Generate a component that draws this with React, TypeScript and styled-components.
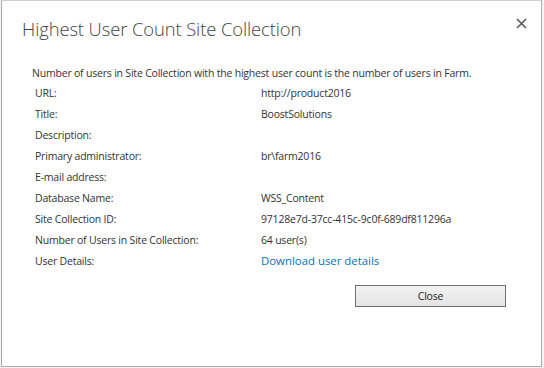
import React from "react";
import styled, { createGlobalStyle } from "styled-components";

const Global = createGlobalStyle`
  html, body { margin: 0; padding: 0; background: #ffffff; }
  body { width: 544px; height: 368px; overflow: hidden; font-family: "Open Sans", "Liberation Sans", sans-serif; }
`;

const Page = styled.div`
  width: 544px;
  height: 368px;
  display: flex;
  background: #f4f4f4;
  box-sizing: border-box;
  padding: 0 2px 1px 1px;
`;

const Dialog = styled.div`
  flex: 1;
  background: #ffffff;
  border: 1px solid #ababab;
  border-top-color: #d0d0d0;
  display: flex;
  flex-direction: column;
  box-sizing: border-box;
`;

const Header = styled.div`
  display: flex;
  justify-content: space-between;
  align-items: flex-start;
  padding: 14px 13px 0 20px;
`;

const Title = styled.h1`
  margin: 0;
  font-family: "Open Sans", sans-serif;
  font-weight: 300;
  font-size: 18.4px;
  color: #444444;
  line-height: 28px;
  letter-spacing: -0.1px;
`;

const CloseX = styled.button`
  border: 0;
  background: none;
  padding: 0;
  margin-top: 1px;
  width: 14px;
  height: 14px;
  display: flex;
  align-items: center;
  justify-content: center;
  cursor: pointer;
`;

const Body = styled.div`
  padding: 20px 0 0 30px;
  display: flex;
  flex-direction: column;
  font-size: 10.5px;
  letter-spacing: -0.2px;
  color: #333333;
`;

const Intro = styled.p`
  margin: 0;
  line-height: 20px;
`;

const Grid = styled.div`
  display: grid;
  grid-template-columns: 226px 1fr;
  padding-left: 3px;
  grid-auto-rows: 20.9px;
  align-items: center;
`;

const Label = styled.div``;
const Value = styled.div``;

const Link = styled.a`
  color: #0072c6;
  text-decoration: none;
  font-size: 11.4px;
  letter-spacing: 0;
`;

const Footer = styled.div`
  display: flex;
  justify-content: flex-end;
  padding: 14px 35px 0 0;
`;

const Button = styled.button`
  width: 151px;
  height: 22px;
  border: 1px solid #707070;
  background: linear-gradient(#f2f2f2, #e4e4e4);
  font-family: "Open Sans", sans-serif;
  font-size: 10.5px;
  letter-spacing: -0.2px;
  color: #222222;
  padding: 0;
`;

const rows: [string, string][] = [
  ["URL:", "http://product2016"],
  ["Title:", "BoostSolutions"],
  ["Description:", ""],
  ["Primary administrator:", "br\\farm2016"],
  ["E-mail address:", ""],
  ["Database Name:", "WSS_Content"],
  ["Site Collection ID:", "97128e7d-37cc-415c-9c0f-689df811296a"],
  ["Number of Users in Site Collection:", "64 user(s)"],
];

export default function App() {
  return (
    <>
      <Global />
      <Page>
        <Dialog>
          <Header>
            <Title>Highest User Count Site Collection</Title>
            <CloseX aria-label="Close">
              <svg width="11" height="11" viewBox="0 0 11 11">
                <path d="M1 1 L10 10 M10 1 L1 10" stroke="#5a5a5a" strokeWidth="1.6" />
              </svg>
            </CloseX>
          </Header>
          <Body>
            <Intro>Number of users in Site Collection with the highest user count is the number of users in Farm.</Intro>
            <Grid>
              {rows.map(([l, v]) => (
                <React.Fragment key={l}>
                  <Label>{l}</Label>
                  <Value>{v}</Value>
                </React.Fragment>
              ))}
              <Label>User Details:</Label>
              <Value>
                <Link href="#">Download user details</Link>
              </Value>
            </Grid>
          </Body>
          <Footer>
            <Button>Close</Button>
          </Footer>
        </Dialog>
      </Page>
    </>
  );
}
